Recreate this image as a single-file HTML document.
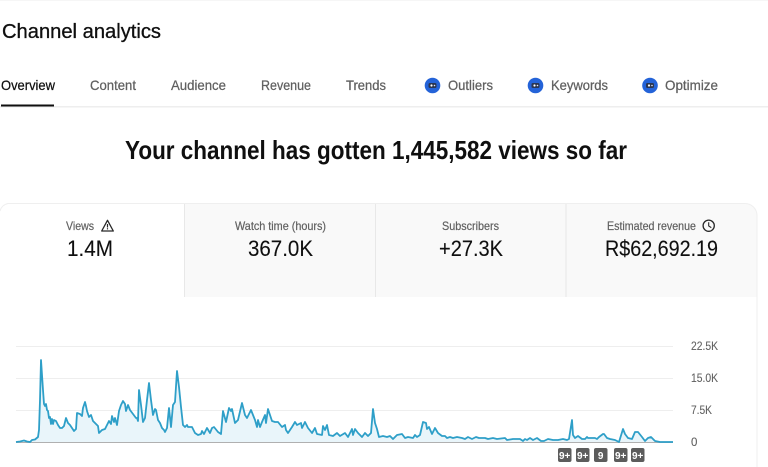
<!DOCTYPE html>
<html lang="en">
<head>
<meta charset="utf-8">
<title>Channel analytics</title>
<style>
html,body{margin:0;padding:0;background:#fff;width:768px;height:467px;overflow:hidden}
svg{display:block;filter:blur(.3px)}
text{font-family:"Liberation Sans",Arial,sans-serif}
.title{font-size:20px;fill:#0f0f0f;stroke:#0f0f0f;stroke-width:.3px}
.tab{font-size:14px;fill:#606060;stroke:#606060;stroke-width:.25px}
.on{fill:#0f0f0f;stroke:#0f0f0f}
.lab{font-size:12px;fill:#606060;stroke:#606060;stroke-width:.2px}
.val{font-size:22px;fill:#0f0f0f;stroke:#0f0f0f;stroke-width:.1px}
.ax{font-size:11.5px;fill:#606060;stroke:#606060;stroke-width:.1px}
.bd{font-size:10px;font-weight:bold;fill:#fff;text-anchor:middle}
</style>
</head>
<body>
<svg width="768" height="467" viewBox="0 0 768 467" xmlns="http://www.w3.org/2000/svg">
<defs>
<path id="l" d="M16 442L20 441.500 22 441 24 440.500 27 441.500 30 442 32 440 35 439.500 38 437 39 430 40 400 41 360 42 375 43 390 44 404 45 406 46 404 47 410 48 411 49 418 50 417 51 424 52 419 53 424 54 420 56 421 58 425 60 428 62 428 64 426 66 418 68 423 70 425 72 428 74 431 76 429 77 413 80 414 82 416 83 408 85 402 86 406 87 411 89 417 91 415 93 421 96 424 98 426 99 433 102 430 105 429 107 425 109 421 111 424 112 416 114 422 115 418 117 425 119 411 121 405 123 401 125 404 126 411 128 405 130 410 133 414 136 418 137 418 138 421 139 390 141 405 143 422 145 418 147 400 149 383 151 400 153 415 155 409 156 410 158 420 160 423 162 428 164 430 165 432 167 428 169 408 171 427 173 405 175 402 177 371 179 387 181 407 183 425 185 427 187 425 188 427 192 427 195 433 198 435 201 434 202 431 204 434 207 428 210 433 212 428 214 427 218 432 221 434 223 411 226 422 229 408 231 411 232 409 235 423 238 420 242 403 245 415 247 418 251 410 255 420 257 427 258 420 260 427 262 422 265 415 266 423 268 409 272 421 275 422 278 422 282 427 285 425 286 430 288 433 292 427 295 422 297 425 301 423 302 428 305 422 308 428 312 433 315 428 317 434 322 435 323 426 325 430 327 425 329 435 333 436 337 433 340 436 345 433 348 437 352 429 353 435 355 429 358 433 362 437 365 433 368 436 371 433 373 409 375 423 377 429 379 437 383 436 387 437 390 436 393 439 397 435 402 434 405 438 408 437 413 438 415 435 417 437 420 435 423 422 426 423 427 429 429 427 432 434 435 428 438 433 442 436 445 436 447 438 450 437 453 438 457 437 462 438 465 439 468 437 472 439 476 437 479 438 485 438 488 439 493 438 497 439 505 438 507 440 513 439 520 439 523 441 525 439 527 440 530 438 533 440 537 438 541 441 544 441 548 439 553 440 558 440 563 439 567 440 569 439 572 420 573 435 575 438 578 436 582 439 585 439 587 437 588 438 595 438 597 439 599 437 603 434 604 434 607 438 610 439 615 440 619 442 623 429 625 434 628 438 632 439 635 432 638 432 642 437 645 441 648 438 651 437 655 441 660 442 667 442 673 442"/>
</defs>
<rect x="0" y="0" width="768" height="1" fill="#f6f6f6"/>
<text x="2" y="38" class="title" textLength="159" lengthAdjust="spacingAndGlyphs">Channel analytics</text>

<text x="1" y="90" class="tab on" textLength="54" lengthAdjust="spacingAndGlyphs">Overview</text>
<text x="90" y="90" class="tab" textLength="46" lengthAdjust="spacingAndGlyphs">Content</text>
<text x="171" y="90" class="tab" textLength="55" lengthAdjust="spacingAndGlyphs">Audience</text>
<text x="261" y="90" class="tab" textLength="50" lengthAdjust="spacingAndGlyphs">Revenue</text>
<text x="346" y="90" class="tab" textLength="40" lengthAdjust="spacingAndGlyphs">Trends</text>
<text x="448" y="90" class="tab" textLength="45" lengthAdjust="spacingAndGlyphs">Outliers</text>
<text x="551" y="90" class="tab" textLength="57" lengthAdjust="spacingAndGlyphs">Keywords</text>
<text x="665" y="90" class="tab" textLength="53" lengthAdjust="spacingAndGlyphs">Optimize</text>

<g>
<circle cx="432.500" cy="85.500" r="7.800" fill="#2463d8"/>
<rect x="428.500" y="83" width="8" height="5" rx="1.500" fill="#2a3550"/>
<circle cx="431.500" cy="85.500" r="1.100" fill="#fff"/><circle cx="434.500" cy="85.500" r=".8" fill="#dfe8fa"/>
</g>
<g>
<circle cx="535.500" cy="85.500" r="7.800" fill="#2463d8"/>
<rect x="531.500" y="83" width="8" height="5" rx="1.500" fill="#2a3550"/>
<circle cx="534.500" cy="85.500" r="1.100" fill="#fff"/><circle cx="537.500" cy="85.500" r=".8" fill="#dfe8fa"/>
</g>
<g>
<circle cx="650" cy="85.500" r="7.800" fill="#2463d8"/>
<rect x="646" y="83" width="8" height="5" rx="1.500" fill="#2a3550"/>
<circle cx="649" cy="85.500" r="1.100" fill="#fff"/><circle cx="652" cy="85.500" r=".8" fill="#dfe8fa"/>
</g>

<rect x="0" y="106" width="768" height="1.500" fill="#eeeeee"/>
<rect x="1" y="104.500" width="53" height="2" fill="#0f0f0f"/>

<text x="125" y="159" font-size="26" font-weight="bold" fill="#0f0f0f" textLength="502" lengthAdjust="spacingAndGlyphs">Your channel has gotten 1,445,582 views so far</text>

<path d="M184.500 203.500H745a12 12 0 0 1 12 12V297H184.500Z" fill="#f9f9f9"/>
<path d="M0 211a10 10 0 0 1 8-7.500H745a12 12 0 0 1 12 12V467" fill="none" stroke="#efefef" stroke-width="1"/>
<rect x="184" y="204" width="1" height="93" fill="#e8e8e8"/>
<rect x="375" y="204" width="1" height="93" fill="#e8e8e8"/>
<rect x="565.500" y="204" width="1" height="93" fill="#e8e8e8"/>

<text x="66" y="230" class="lab" textLength="28" lengthAdjust="spacingAndGlyphs">Views</text>
<path d="M107.500 220.300L113.300 231H101.700Z" fill="none" stroke="#282828" stroke-width="1.300" stroke-linejoin="round"/>
<rect x="106.900" y="224" width="1.200" height="3.500" fill="#282828"/><rect x="106.900" y="228.200" width="1.200" height="1.200" fill="#282828"/>
<text x="67" y="256" class="val" textLength="46" lengthAdjust="spacingAndGlyphs">1.4M</text>

<text x="235" y="230" class="lab" textLength="91" lengthAdjust="spacingAndGlyphs">Watch time (hours)</text>
<text x="248" y="256" class="val" textLength="65" lengthAdjust="spacingAndGlyphs">367.0K</text>

<text x="442" y="230" class="lab" textLength="57" lengthAdjust="spacingAndGlyphs">Subscribers</text>
<text x="439" y="256" class="val" textLength="64" lengthAdjust="spacingAndGlyphs">+27.3K</text>

<text x="607" y="230" class="lab" textLength="89" lengthAdjust="spacingAndGlyphs">Estimated revenue</text>
<circle cx="708.700" cy="225.700" r="5.600" fill="none" stroke="#282828" stroke-width="1.300"/>
<path d="M708.700 222.300V226L711.300 227.600" fill="none" stroke="#282828" stroke-width="1.100"/>
<text x="605" y="256" class="val" textLength="113" lengthAdjust="spacingAndGlyphs">R$62,692.19</text>

<g fill="#eeeeee">
<rect x="16" y="346" width="657" height="1"/>
<rect x="16" y="378" width="657" height="1"/>
<rect x="16" y="410" width="657" height="1"/>
</g>
<use href="#l" fill="#e9f5fa"/>
<rect x="16" y="442" width="657" height="1" fill="#b0b0b0"/>
<use href="#l" fill="none" stroke="#2e9fc8" stroke-width="1.800" stroke-linejoin="round"/>

<text x="691" y="350" class="ax" textLength="27" lengthAdjust="spacingAndGlyphs">22.5K</text>
<text x="691" y="382" class="ax" textLength="27" lengthAdjust="spacingAndGlyphs">15.0K</text>
<text x="691" y="414" class="ax" textLength="21" lengthAdjust="spacingAndGlyphs">7.5K</text>
<text x="691" y="446" class="ax">0</text>

<g fill="#5c5c5c">
<rect x="558" y="448" width="13.500" height="14" rx="2"/>
<rect x="576" y="448" width="13.500" height="14" rx="2"/>
<rect x="594" y="448" width="13.500" height="14" rx="2"/>
<rect x="614" y="448" width="13.500" height="14" rx="2"/>
<rect x="631" y="448" width="13.500" height="14" rx="2"/>
</g>
<text x="564.700" y="459" class="bd">9+</text>
<text x="582.700" y="459" class="bd">9+</text>
<text x="600.700" y="459" class="bd">9</text>
<text x="620.700" y="459" class="bd">9+</text>
<text x="637.700" y="459" class="bd">9+</text>
</svg>
</body>
</html>
